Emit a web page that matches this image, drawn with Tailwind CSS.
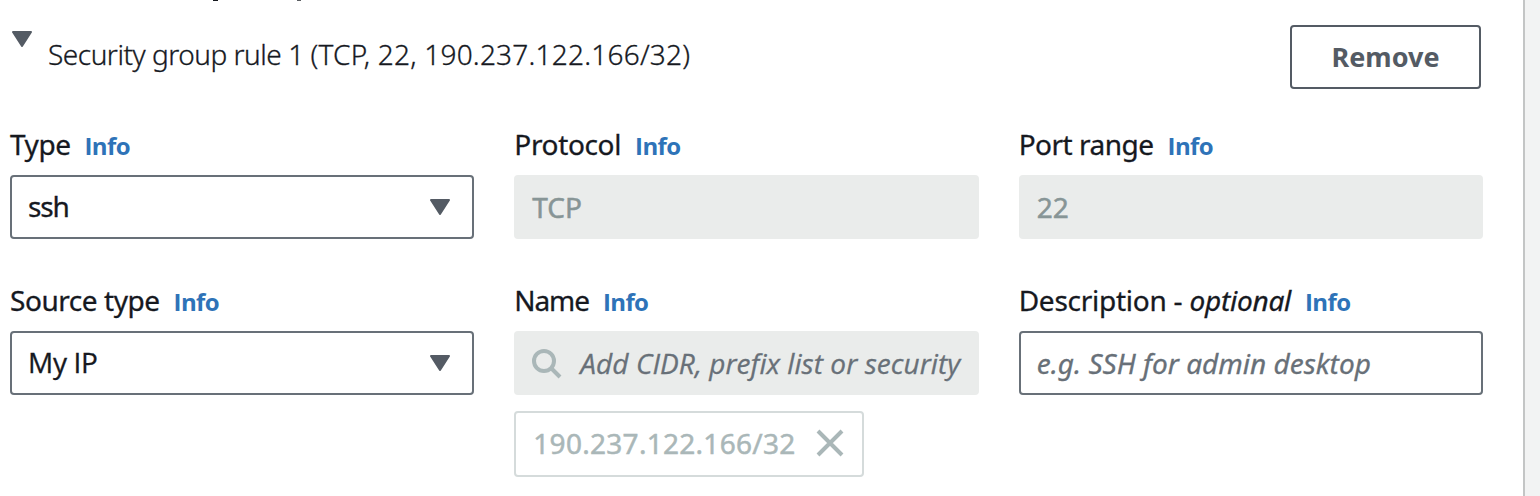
<!DOCTYPE html>
<html lang="en">
<head>
<meta charset="utf-8">
<title>Security group rule</title>
<script src="https://cdn.jsdelivr.net/npm/@tailwindcss/browser@4"></script>
</head>
<body class="h-[496px] overflow-hidden bg-[#f2f3f3] font-['Noto_Sans',sans-serif] text-[28px] leading-[38px] whitespace-nowrap text-[#16191f]">
<main class="flex h-full w-[1525px] flex-col border-r-2 border-[#c3c5c5] bg-white pr-10 pl-[10px]">
  <!-- descenders of the heading scrolled out above -->
  <div class="flex h-px gap-[79px] pl-[203px]"><div class="w-[5px] bg-[#16191f]"></div><div class="w-1 bg-[#16191f]/70"></div></div>
  <header class="flex justify-between pt-6">
    <div class="flex items-start">
      <svg class="mt-[6px] ml-[2px] h-4 w-5" viewBox="0 0 20 16" fill="#545b64" stroke="#545b64" stroke-width="2" stroke-linejoin="round"><path d="M1 1h18L10 15z"/></svg>
      <h2 class="mt-[10px] ml-4 font-light tracking-[0.22px] [-webkit-text-stroke:0.3px]"><span class="tracking-[-0.48px]">Security group rule 1 </span>(TCP, 22, 190.237.122.166/32)</h2>
    </div>
    <button class="mr-[2px] flex h-16 w-[191px] items-center justify-center rounded-[4px] border-2 border-[#545b64] text-[27px] font-bold text-[#545b64]">Remove</button>
  </header>
  <section class="mt-9 grid grid-cols-3 gap-x-10 gap-y-[42px]">
    <div>
      <div class="flex items-baseline gap-[14px] tracking-[-0.45px]"><span class="[-webkit-text-stroke:0.3px]">Type</span><a class="font-['Open_Sans'] text-2xl leading-[38px] font-bold tracking-[-0.6px] text-[#2e73b8]">Info</a></div>
      <div class="mt-[10px] flex h-16 items-center justify-between rounded-[4px] border-2 border-[#687078] pr-[22px] pb-[2px] pl-4"><span class="tracking-[-1.2px] [-webkit-text-stroke:0.3px]">ssh</span>
        <svg class="mt-[2px] h-4 w-5" viewBox="0 0 20 16" fill="#545b64" stroke="#545b64" stroke-width="2" stroke-linejoin="round"><path d="M1 1h18L10 15z"/></svg></div>
    </div>
    <div>
      <div class="flex items-baseline gap-[14px] tracking-[-0.35px]"><span class="[-webkit-text-stroke:0.3px]">Protocol</span><a class="font-['Open_Sans'] text-2xl leading-[38px] font-bold tracking-[-0.6px] text-[#2e73b8]">Info</a></div>
      <div class="mt-[10px] flex h-16 items-center rounded-[4px] bg-[#eaeceb] px-[18px] text-[#879596]"><span class="[-webkit-text-stroke:0.5px]">TCP</span></div>
    </div>
    <div>
      <div class="flex items-baseline gap-[14px] tracking-[-0.5px]"><span class="[-webkit-text-stroke:0.3px]">Port range</span><a class="font-['Open_Sans'] text-2xl leading-[38px] font-bold tracking-[-0.6px] text-[#2e73b8]">Info</a></div>
      <div class="mt-[10px] flex h-16 items-center rounded-[4px] bg-[#eaeceb] px-[18px] text-[#879596]"><span class="[-webkit-text-stroke:0.5px]">22</span></div>
    </div>
    <div>
      <div class="flex items-baseline gap-[14px] tracking-[-0.45px]"><span class="[-webkit-text-stroke:0.3px]">Source type</span><a class="font-['Open_Sans'] text-2xl leading-[38px] font-bold tracking-[-0.6px] text-[#2e73b8]">Info</a></div>
      <div class="mt-[10px] flex h-16 items-center justify-between rounded-[4px] border-2 border-[#687078] pr-[22px] pb-[2px] pl-4"><span class="font-['Open_Sans'] tracking-[-0.3px] [-webkit-text-stroke:0.3px]">My IP</span>
        <svg class="mt-[2px] h-4 w-5" viewBox="0 0 20 16" fill="#545b64" stroke="#545b64" stroke-width="2" stroke-linejoin="round"><path d="M1 1h18L10 15z"/></svg></div>
    </div>
    <div>
      <div class="flex items-baseline gap-[14px] tracking-[-1.1px]"><span class="[-webkit-text-stroke:0.3px]">Name</span><a class="font-['Open_Sans'] text-2xl leading-[38px] font-bold tracking-[-0.6px] text-[#2e73b8]">Info</a></div>
      <div class="mt-[10px] flex h-16 items-center rounded-[4px] bg-[#eaeceb] pl-[18px] text-[#687078]">
        <svg class="mt-[2px] mr-[18px] h-[30px] w-[30px]" viewBox="0 0 30 30" fill="none" stroke="#aab7b8" stroke-width="4"><circle cx="12" cy="12" r="10"/><path d="M19 19l9 9"/></svg>
        <span class="font-['Open_Sans'] tracking-[0.06px] italic [-webkit-text-stroke:0.3px]">Add CIDR, prefix list or security</span></div>
      <div class="mt-4 flex h-[66px] w-[350px] items-center justify-between rounded-[4px] border-2 border-[#d5dbdb] px-[18px] text-[#aab7b8]"><span class="-ml-px pb-[3px] tracking-[0.28px] [-webkit-text-stroke:0.5px]">190.237.122.166/32</span>
        <svg class="mb-[2px] h-7 w-7" viewBox="0 0 28 28" fill="none" stroke="#aab7b8" stroke-width="4"><path d="M2 2l24 24M26 2L2 26"/></svg></div>
    </div>
    <div>
      <div class="flex items-baseline gap-[14px] tracking-[-0.25px]"><span class="[-webkit-text-stroke:0.3px]">Description - <i>optional</i></span><a class="font-['Open_Sans'] text-2xl leading-[38px] font-bold tracking-[-0.6px] text-[#2e73b8]">Info</a></div>
      <div class="mt-[10px] flex h-16 items-center rounded-[4px] border-2 border-[#687078] px-4 text-[#687078]"><span class="italic [-webkit-text-stroke:0.3px]">e.g. SSH for admin desktop</span></div>
    </div>
  </section>
</main>
</body>
</html>
